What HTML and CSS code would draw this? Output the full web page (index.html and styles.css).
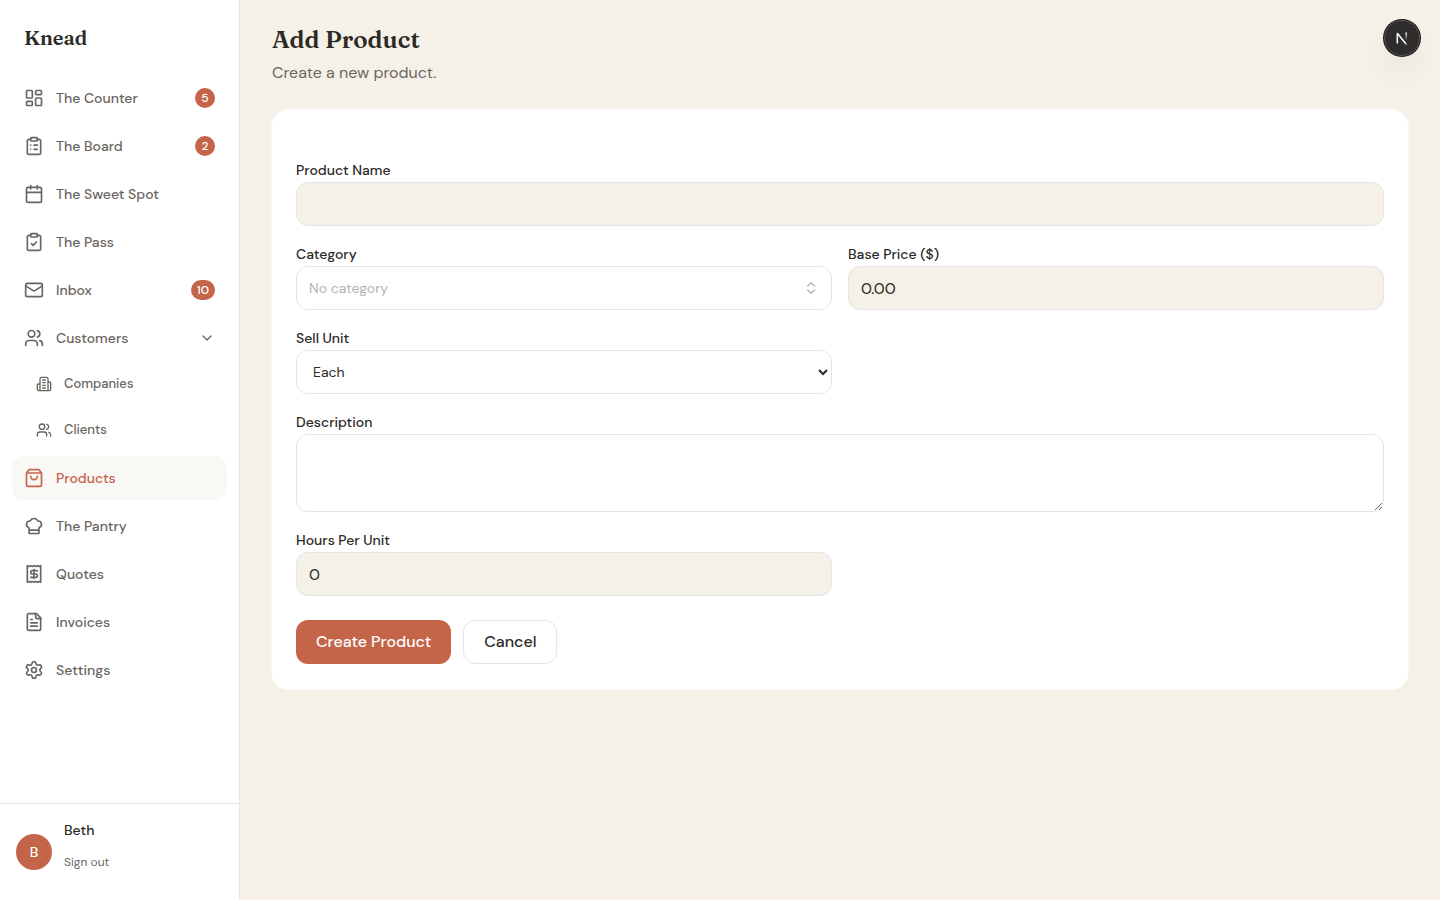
FILE: index.html
```html
<!DOCTYPE html>
<html lang="en">
<head>
<meta charset="utf-8">
<meta name="viewport" content="width=device-width, initial-scale=1">
<title>Add Product</title>
<link rel="stylesheet" href="styles.css">
</head>
<body>
<div class="app">
  <aside class="sidebar">
    <div class="brand">Knead</div>
    <nav class="nav" aria-label="Main">
      <a class="nav-item" href="#"><svg class="icon" viewBox="0 0 24 24"><rect width="7" height="9" x="3" y="3" rx="1"/><rect width="7" height="5" x="14" y="3" rx="1"/><rect width="7" height="9" x="14" y="12" rx="1"/><rect width="7" height="5" x="3" y="16" rx="1"/></svg><span class="nav-label">The Counter</span><span class="badge">5</span></a>
      <a class="nav-item" href="#"><svg class="icon" viewBox="0 0 24 24"><rect width="8" height="4" x="8" y="2" rx="1"/><path d="M16 4h2a2 2 0 0 1 2 2v14a2 2 0 0 1-2 2H6a2 2 0 0 1-2-2V6a2 2 0 0 1 2-2h2M12 11h4M12 16h4M8 11h.01M8 16h.01"/></svg><span class="nav-label">The Board</span><span class="badge">2</span></a>
      <a class="nav-item" href="#"><svg class="icon" viewBox="0 0 24 24"><path d="M8 2v4M16 2v4"/><rect width="18" height="18" x="3" y="4" rx="2"/><path d="M3 10h18"/></svg><span class="nav-label">The Sweet Spot</span></a>
      <a class="nav-item" href="#"><svg class="icon" viewBox="0 0 24 24"><rect width="8" height="4" x="8" y="2" rx="1"/><path d="M16 4h2a2 2 0 0 1 2 2v14a2 2 0 0 1-2 2H6a2 2 0 0 1-2-2V6a2 2 0 0 1 2-2h2M9 14l2 2 4-4"/></svg><span class="nav-label">The Pass</span></a>
      <a class="nav-item" href="#"><svg class="icon" viewBox="0 0 24 24"><rect width="20" height="16" x="2" y="4" rx="2"/><path d="m22 7-8.97 5.7a1.94 1.94 0 0 1-2.06 0L2 7"/></svg><span class="nav-label">Inbox</span><span class="badge">10</span></a>
      <div class="nav-group">
        <button class="nav-item" type="button" aria-expanded="true"><svg class="icon" viewBox="0 0 24 24"><path d="M16 21v-2a4 4 0 0 0-4-4H6a4 4 0 0 0-4 4v2"/><circle cx="9" cy="7" r="4"/><path d="M22 21v-2a4 4 0 0 0-3-3.87M16 3.13a4 4 0 0 1 0 7.75"/></svg><span class="nav-label">Customers</span><svg class="icon icon-small" viewBox="0 0 24 24"><path d="m6 9 6 6 6-6"/></svg></button>
        <a class="nav-item nav-sub" href="#"><svg class="icon icon-small" viewBox="0 0 24 24"><path d="M6 22V4a2 2 0 0 1 2-2h8a2 2 0 0 1 2 2v18ZM6 12H4a2 2 0 0 0-2 2v6a2 2 0 0 0 2 2h2M18 9h2a2 2 0 0 1 2 2v9a2 2 0 0 1-2 2h-2M10 6h4M10 10h4M10 14h4M10 18h4"/></svg><span class="nav-label">Companies</span></a>
        <a class="nav-item nav-sub" href="#"><svg class="icon icon-small" viewBox="0 0 24 24"><path d="M16 21v-2a4 4 0 0 0-4-4H6a4 4 0 0 0-4 4v2"/><circle cx="9" cy="7" r="4"/><path d="M22 21v-2a4 4 0 0 0-3-3.87M16 3.13a4 4 0 0 1 0 7.75"/></svg><span class="nav-label">Clients</span></a>
      </div>
      <a class="nav-item active" href="#" aria-current="page"><svg class="icon" viewBox="0 0 24 24"><path d="M6 2 3 6v14a2 2 0 0 0 2 2h14a2 2 0 0 0 2-2V6l-3-4ZM3 6h18M16 10a4 4 0 0 1-8 0"/></svg><span class="nav-label">Products</span></a>
      <a class="nav-item" href="#"><svg class="icon" viewBox="0 0 24 24"><path d="M17 21a1 1 0 0 0 1-1v-5.35c0-.457.316-.844.727-1.041a4 4 0 0 0-2.134-7.589 5 5 0 0 0-9.186 0 4 4 0 0 0-2.134 7.588c.411.198.727.585.727 1.041V20a1 1 0 0 0 1 1ZM6 17h12"/></svg><span class="nav-label">The Pantry</span></a>
      <a class="nav-item" href="#"><svg class="icon" viewBox="0 0 24 24"><path d="M4 2v20l2-1 2 1 2-1 2 1 2-1 2 1 2-1 2 1V2l-2 1-2-1-2 1-2-1-2 1-2-1-2 1Z"/><path d="M16 8h-6a2 2 0 1 0 0 4h4a2 2 0 1 1 0 4H8M12 17.5v-11"/></svg><span class="nav-label">Quotes</span></a>
      <a class="nav-item" href="#"><svg class="icon" viewBox="0 0 24 24"><path d="M15 2H6a2 2 0 0 0-2 2v16a2 2 0 0 0 2 2h12a2 2 0 0 0 2-2V7Z"/><path d="M14 2v4a2 2 0 0 0 2 2h4M10 9H8M16 13H8M16 17H8"/></svg><span class="nav-label">Invoices</span></a>
      <a class="nav-item" href="#"><svg class="icon" viewBox="0 0 24 24"><path d="M9.671 4.136a2.34 2.34 0 0 1 4.659 0 2.34 2.34 0 0 0 3.319 1.915 2.34 2.34 0 0 1 2.33 4.033 2.34 2.34 0 0 0 0 3.831 2.34 2.34 0 0 1-2.33 4.033 2.34 2.34 0 0 0-3.319 1.915 2.34 2.34 0 0 1-4.659 0 2.34 2.34 0 0 0-3.32-1.915 2.34 2.34 0 0 1-2.33-4.033 2.34 2.34 0 0 0 0-3.831A2.34 2.34 0 0 1 6.35 6.051a2.34 2.34 0 0 0 3.319-1.915"/><circle cx="12" cy="12" r="3"/></svg><span class="nav-label">Settings</span></a>
    </nav>
    <div class="account">
      <span class="avatar">B</span>
      <div class="account-info">
        <span class="account-name">Beth</span>
        <button class="sign-out" type="button">Sign out</button>
      </div>
    </div>
  </aside>

  <main class="main">
    <header class="page-header">
      <h1 class="title">Add Product</h1>
      <p class="subtitle">Create a new product.</p>
    </header>
    <form class="card">
      <div class="field">
        <label for="name">Product Name</label>
        <input class="control filled" id="name" type="text">
      </div>
      <div class="row">
        <div class="field">
          <label for="category">Category</label>
          <button class="control picker" id="category" type="button"><span>No category</span><svg class="icon icon-small" viewBox="0 0 24 24"><path d="m7 15 5 5 5-5M7 9l5-5 5 5"/></svg></button>
        </div>
        <div class="field">
          <label for="price">Base Price ($)</label>
          <input class="control filled" id="price" type="text" inputmode="decimal" value="0.00">
        </div>
      </div>
      <div class="row">
        <div class="field">
          <label for="unit">Sell Unit</label>
          <select class="control select" id="unit"><option>Each</option></select>
        </div>
      </div>
      <div class="field">
        <label for="description">Description</label>
        <textarea class="control textarea" id="description" rows="3"></textarea>
      </div>
      <div class="row">
        <div class="field">
          <label for="hours">Hours Per Unit</label>
          <input class="control filled" id="hours" type="text" inputmode="decimal" value="0">
        </div>
      </div>
      <div class="actions">
        <button class="button primary" type="submit">Create Product</button>
        <button class="button secondary" type="button">Cancel</button>
      </div>
    </form>
  </main>
</div>
<button class="dev-button" type="button" aria-label="Open developer tools">
  <svg class="dev-mark" viewBox="0 0 40 40" fill="none">
    <defs>
      <linearGradient id="diagonal" x1="20" y1="20" x2="27" y2="29" gradientUnits="userSpaceOnUse"><stop stop-color="#fff"/><stop offset="0.6" stop-color="#fff"/><stop offset="1" stop-color="#fff" stop-opacity="0"/></linearGradient>
      <linearGradient id="stem" x1="25" y1="13" x2="25" y2="23" gradientUnits="userSpaceOnUse"><stop stop-color="#fff"/><stop offset="1" stop-color="#fff" stop-opacity="0"/></linearGradient>
    </defs>
    <path d="M14.5 26.5V14.5L25.5 28" stroke="url(#diagonal)" stroke-width="1.8" stroke-linejoin="bevel"/>
    <path d="M25 13.5V24" stroke="url(#stem)" stroke-width="1.8"/>
  </svg>
</button>
</body>
</html>
```
FILE: styles.css
```css
:root {
  --accent: #c4654a;
  --ink: #2d2a26;
  --muted: #6b6560;
  --cream: #f5f0e8;
  --line: #e5e5e5;
}
* { box-sizing: border-box; }
body {
  margin: 0;
  background: var(--cream);
  color: var(--ink);
  font-family: "DM Sans", Inter, "Open Sans", sans-serif;
  font-size: 16px;
  line-height: 24px;
}
button, input, select, textarea { font: inherit; color: inherit; }
button { cursor: pointer; }
.app { display: flex; min-height: 100vh; }
.sidebar {
  display: flex;
  flex-direction: column;
  flex: none;
  width: 240px;
  background: #fff;
  border-right: 1px solid var(--line);
}
.brand, .title {
  font-family: Fraunces, "Liberation Serif", serif;
  font-weight: 600;
}
.brand { padding: 24px 24px 20px; font-size: 20px; line-height: 28px; }
.nav {
  display: flex;
  flex: 1;
  flex-direction: column;
  gap: 4px;
  padding: 4px 12px;
}
.nav-group { display: flex; flex-direction: column; gap: 2px; }
.nav-item {
  display: flex;
  align-items: center;
  gap: 12px;
  width: 100%;
  height: 44px;
  padding: 0 12px;
  border: 0;
  border-radius: 12px;
  background: none;
  color: var(--muted);
  font-size: 14px;
  font-weight: 500;
  line-height: 20px;
  text-align: left;
  text-decoration: none;
}
.nav-sub { padding-left: 24px; font-size: 13px; }
.nav-item.active { background: #faf8f5; color: var(--accent); }
.nav-label { flex: 1; }
.icon {
  flex: none;
  width: 20px;
  height: 20px;
  fill: none;
  stroke: currentColor;
  stroke-width: 2;
  stroke-linecap: round;
  stroke-linejoin: round;
}
.icon-small { width: 16px; height: 16px; }
.badge {
  min-width: 20px;
  padding: 0 6px;
  border-radius: 10px;
  background: var(--accent);
  color: #fff;
  font-size: 12px;
  text-align: center;
}
.account {
  display: flex;
  align-items: center;
  gap: 12px;
  padding: 16px;
  border-top: 1px solid var(--line);
}
.avatar {
  width: 36px;
  border-radius: 18px;
  background: var(--accent);
  color: #fff;
  font-size: 14px;
  font-weight: 500;
  line-height: 36px;
  text-align: center;
}
.account-info { display: flex; flex-direction: column; align-items: flex-start; }
.account-name { font-size: 14px; font-weight: 500; line-height: 20px; }
.sign-out {
  height: 44px;
  padding: 0;
  border: 0;
  background: none;
  color: var(--muted);
  font-size: 12px;
}
.main { flex: 1; min-width: 0; padding: 24px 32px; }
.page-header { margin-bottom: 24px; }
.title { margin: 0 0 4px; font-size: 24px; line-height: 32px; }
.subtitle { margin: 0; color: var(--muted); line-height: 26px; }
.card {
  display: flex;
  flex-direction: column;
  gap: 16px;
  padding: 48px 24px 25px;
  border-radius: 16px;
  background: #fff;
  box-shadow: 0 0 0 1px #faf8f5;
}
.row { display: grid; grid-template-columns: 1fr 1fr; gap: 16px; }
.field { display: flex; flex-direction: column; }
.field label { font-size: 14px; font-weight: 500; }
.control {
  width: 100%;
  height: 44px;
  padding: 0 12px;
  border: 1px solid var(--line);
  border-radius: 12px;
  background: #fff;
}
.filled { background: var(--cream); }
.picker {
  display: flex;
  align-items: center;
  justify-content: space-between;
  color: #b5b2af;
  font-size: 14px;
  text-align: left;
}
.select { padding: 0 0 0 12px; font-size: 14px; }
.textarea { display: block; height: 78px; padding: 12px; resize: vertical; }
.actions { display: flex; gap: 12px; padding-top: 8px; }
.button {
  height: 44px;
  padding: 0 20px;
  border: 0;
  border-radius: 12px;
  font-weight: 500;
}
.primary { background: var(--accent); color: #fff; }
.secondary { border: 1px solid var(--line); background: #fff; }
.dev-button {
  position: fixed;
  top: 20px;
  right: 20px;
  width: 36px;
  height: 36px;
  padding: 0;
  border: 1px solid #555;
  border-radius: 50%;
  background: #2e2d2c;
  box-shadow: 0 0 0 1px #171717, 0 16px 32px -8px rgba(0, 0, 0, 0.14);
}
.dev-mark { display: block; width: 100%; height: 100%; }
```
